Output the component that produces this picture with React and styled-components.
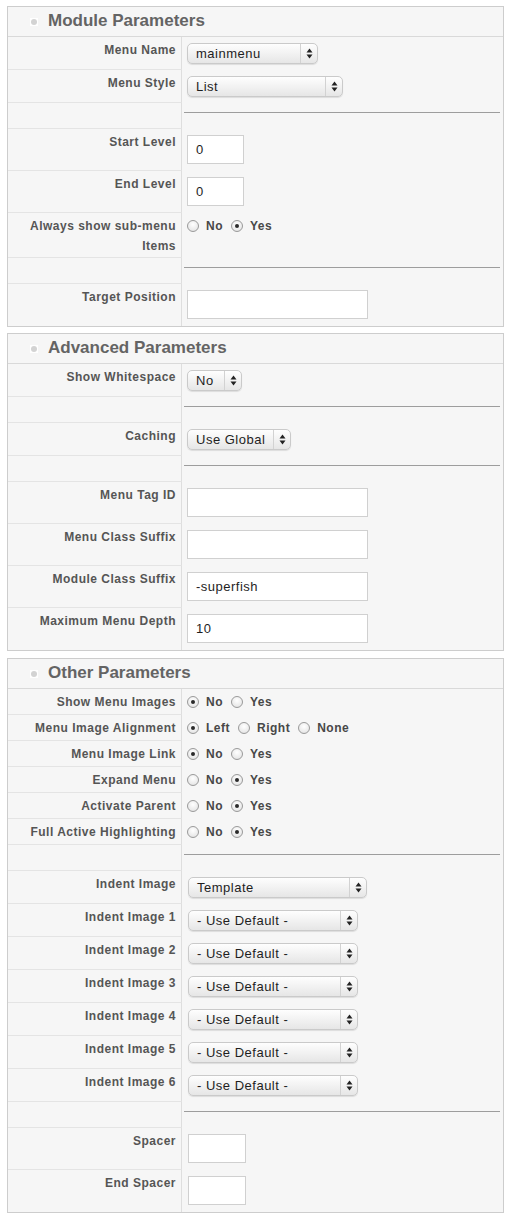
import React from "react";
import styled, { createGlobalStyle } from "styled-components";

const Global = createGlobalStyle`
  html, body { margin: 0; padding: 0; background: #fff; }
  body { font-family: "Liberation Sans", Arial, sans-serif; }
`;

const Page = styled.div`
  width: 510px;
  padding: 6px 6px 8px 7px;
  box-sizing: border-box;
  display: flex;
  flex-direction: column;
`;

const Panel = styled.section`
  border: 1px solid #cdcdcd;
  background: #f6f6f6;
  margin-top: ${(p) => p.$gap}px;
`;

const Header = styled.div`
  height: 29px;
  border-bottom: 1px solid #d9d9d9;
  display: flex;
  align-items: center;
  padding-left: 22px;
  gap: 10px;
`;

const Bullet = styled.span`
  width: 8px;
  height: 8px;
  background: #fff;
  display: flex;
  align-items: center;
  justify-content: center;
  &::after {
    content: "";
    width: 6px;
    height: 6px;
    border-radius: 50%;
    background: #d3d3d3;
  }
`;

const Title = styled.h3`
  margin: 0 0 1px;
  font-size: 17px;
  font-weight: bold;
  color: #646464;
  line-height: 20px;
`;

const Row = styled.div`
  display: grid;
  grid-template-columns: 174px 1fr;
  &:last-child > div:first-child {
    border-bottom: none;
  }
`;

const Label = styled.div`
  box-sizing: border-box;
  border-right: 1px solid #dedede;
  border-bottom: 1px solid #e4e4e4;
  padding: 3px 5px 1px 4px;
  text-align: right;
  font-size: 12px;
  font-weight: bold;
  letter-spacing: 0.5px;
  line-height: 20px;
  color: #555;
`;

const Value = styled.div`
  padding: ${(p) => p.$pad};
  padding-left: 5px;
  padding-right: 3px;
  display: flex;
  align-items: flex-start;
`;

const Rule = styled.div`
  flex: 1;
  margin-left: -3px;
  border-top: 1px solid #9d9d9d;
`;

const SelectBox = styled.div`
  width: ${(p) => p.$w}px;
  height: 21px;
  box-sizing: border-box;
  border: 1px solid #cacaca;
  border-radius: 5px;
  background: linear-gradient(#fefefe, #f2f2f2 50%, #e6e6e6);
  box-shadow: 0 1px 1px rgba(0, 0, 0, 0.1);
  display: flex;
  align-items: stretch;
  font-size: 13px;
  letter-spacing: 0.5px;
  color: #1e1e1e;
`;

const SelectText = styled.span`
  flex: 1;
  padding-left: 8px;
  line-height: 19px;
  white-space: nowrap;
  overflow: hidden;
`;

const SelectArrow = styled.span`
  width: 16px;
  border-left: 1px solid #d2d2d2;
  display: flex;
  align-items: center;
  justify-content: center;
`;

const TextInput = styled.div`
  width: ${(p) => p.$w}px;
  height: 29px;
  box-sizing: border-box;
  background: #fff;
  border: 1px solid #d0d0d0;
  padding-left: 8px;
  font-size: 13px;
  letter-spacing: 0.5px;
  line-height: 27px;
  color: #1e1e1e;
`;

const RadioGroup = styled.div`
  display: flex;
  align-items: center;
  height: 20px;
  gap: 8px;
`;

const Option = styled.label`
  display: flex;
  align-items: center;
  gap: 7px;
  font-size: 12px;
  font-weight: bold;
  letter-spacing: 0.5px;
  color: #484848;
`;

const Radio = styled.span`
  width: 12px;
  height: 12px;
  box-sizing: border-box;
  border-radius: 50%;
  border: 1px solid #9a9a9a;
  background: radial-gradient(circle at 50% 35%, #ffffff, #e9e9e9 70%, #d4d4d4);
  display: flex;
  align-items: center;
  justify-content: center;
  &::after {
    content: "";
    width: 4px;
    height: 4px;
    border-radius: 50%;
    background: ${(p) => (p.$on ? "#2a2a2a" : "transparent")};
  }
`;

const Arrows = () => (
  <svg width="7" height="11" viewBox="0 0 7 11">
    <path d="M3.5 0.5 L6.5 4.5 L0.5 4.5 Z" fill="#222" />
    <path d="M3.5 10.5 L6.5 6.5 L0.5 6.5 Z" fill="#222" />
  </svg>
);

const sections = [
  {
    title: "Module Parameters",
    gap: 0,
    rows: [
      { type: "select", label: "Menu Name", value: "mainmenu", w: 131 },
      { type: "select", label: "Menu Style", value: "List", w: 156 },
      { type: "spacer" },
      { type: "input", label: "Start Level", value: "0", w: 57 },
      { type: "input", label: "End Level", value: "0", w: 57 },
      { type: "radio", label: "Always show sub-menu Items", options: ["No", "Yes"], on: 1 },
      { type: "spacer" },
      { type: "input", label: "Target Position", value: "", w: 181 },
    ],
  },
  {
    title: "Advanced Parameters",
    gap: 6,
    rows: [
      { type: "select", label: "Show Whitespace", value: "No", w: 55 },
      { type: "spacer" },
      { type: "select", label: "Caching", value: "Use Global", w: 104 },
      { type: "spacer" },
      { type: "input", label: "Menu Tag ID", value: "", w: 181 },
      { type: "input", label: "Menu Class Suffix", value: "", w: 181 },
      { type: "input", label: "Module Class Suffix", value: "-superfish", w: 181 },
      { type: "input", label: "Maximum Menu Depth", value: "10", w: 181 },
    ],
  },
  {
    title: "Other Parameters",
    gap: 7,
    rows: [
      { type: "radio", label: "Show Menu Images", options: ["No", "Yes"], on: 0 },
      { type: "radio", label: "Menu Image Alignment", options: ["Left", "Right", "None"], on: 0 },
      { type: "radio", label: "Menu Image Link", options: ["No", "Yes"], on: 0 },
      { type: "radio", label: "Expand Menu", options: ["No", "Yes"], on: 1 },
      { type: "radio", label: "Activate Parent", options: ["No", "Yes"], on: 1 },
      { type: "radio", label: "Full Active Highlighting", options: ["No", "Yes"], on: 1 },
      { type: "spacer" },
      { type: "select", label: "Indent Image", value: "Template", w: 179, x: 1 },
      { type: "select", label: "Indent Image 1", value: "- Use Default -", w: 170, x: 1 },
      { type: "select", label: "Indent Image 2", value: "- Use Default -", w: 170, x: 1 },
      { type: "select", label: "Indent Image 3", value: "- Use Default -", w: 170, x: 1 },
      { type: "select", label: "Indent Image 4", value: "- Use Default -", w: 170, x: 1 },
      { type: "select", label: "Indent Image 5", value: "- Use Default -", w: 170, x: 1 },
      { type: "select", label: "Indent Image 6", value: "- Use Default -", w: 170, x: 1 },
      { type: "spacer" },
      { type: "input", label: "Spacer", value: "", w: 58, x: 1 },
      { type: "input", label: "End Spacer", value: "", w: 58, x: 1 },
    ],
  },
];

const pads = {
  select: "6px 0 6px",
  input: "6px 0 7px",
  spacer: "9px 0 16px",
  radio: "3px 0 3px",
};

function Field({ row }) {
  const shift = row.x ? { marginLeft: row.x } : undefined;
  if (row.type === "spacer") return <Rule />;
  if (row.type === "select")
    return (
      <SelectBox $w={row.w} style={shift}>
        <SelectText>{row.value}</SelectText>
        <SelectArrow>
          <Arrows />
        </SelectArrow>
      </SelectBox>
    );
  if (row.type === "input")
    return (
      <TextInput $w={row.w} style={shift}>
        {row.value}
      </TextInput>
    );
  return (
    <RadioGroup>
      {row.options.map((o, i) => (
        <Option key={o}>
          <Radio $on={i === row.on} />
          {o}
        </Option>
      ))}
    </RadioGroup>
  );
}

export default function App() {
  return (
    <>
      <Global />
      <Page>
        {sections.map((s) => (
          <Panel key={s.title} $gap={s.gap}>
            <Header>
              <Bullet />
              <Title>{s.title}</Title>
            </Header>
            {s.rows.map((r, i) => (
              <Row key={i}>
                <Label>{r.label || ""}</Label>
                <Value $pad={pads[r.type]}>
                  <Field row={r} />
                </Value>
              </Row>
            ))}
          </Panel>
        ))}
      </Page>
    </>
  );
}
